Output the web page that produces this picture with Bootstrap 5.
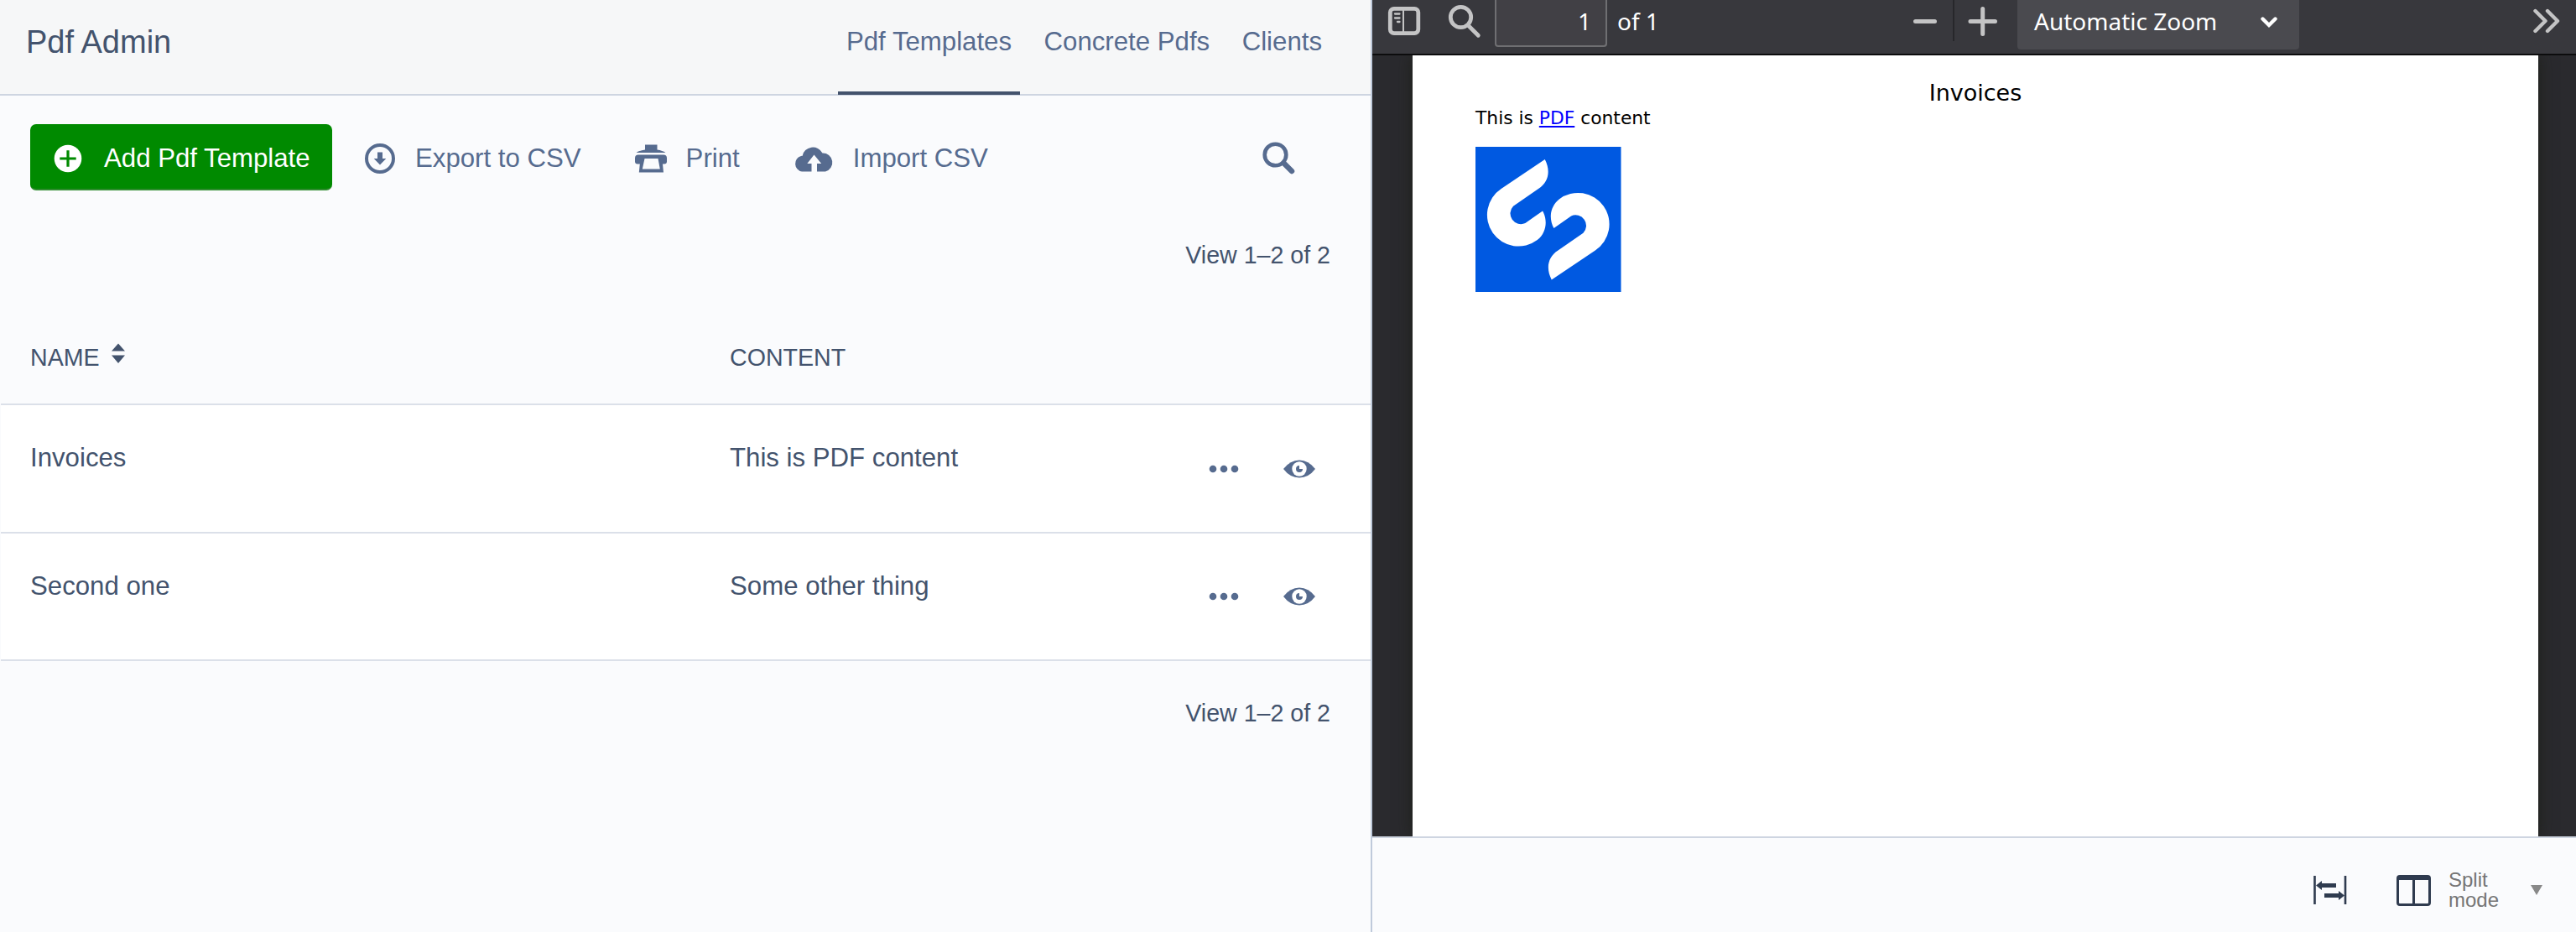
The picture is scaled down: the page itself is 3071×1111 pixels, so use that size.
<!DOCTYPE html>
<html lang="en">
<head>
<meta charset="utf-8">
<title>Pdf Admin</title>
<link href="https://cdn.jsdelivr.net/npm/bootstrap@5.3.0/dist/css/bootstrap.min.css" rel="stylesheet">
<style>
html, body { height: 100%; overflow: hidden; }
body { font-family: "Liberation Sans", Arial, sans-serif; font-size: 31.2px; line-height: 40px; color: #43536d; background: #fafbfd; }
svg { display: block; flex: none; }
.admin-pane { width: 1636px; border-right: 2px solid #bfcadb; }
.admin-head { height: 114px; background: #f6f7f8; border-bottom: 2px solid #ced5e1; padding-left: 31px; padding-right: 48px; }
.admin-title { font-size: 38px; line-height: 100px; font-weight: 400; color: #43536d; }
.admin-tabs { gap: 18.5px; height: 113px; }
.admin-tabs .nav-link { padding: 30px 10px 0; color: #566b8f; border-bottom: 4px solid transparent; white-space: nowrap; }
.admin-tabs .nav-link.active { border-bottom-color: #43536d; }
.tools { height: 113px; padding: 34px 46px 0 36px; }
.tools .btn { height: 79px; font-size: 31.2px; line-height: 40px; padding: 3px 0 0; border: 0; color: #566b8f; border-radius: 7px; white-space: nowrap; }
.tools .btn-add { width: 360px; background: #008a00; color: #fff; border-bottom: 2px solid #2f8c2f; padding: 5px 24px 0 28px; gap: 26px; }
.btn-export { margin-left: 38px; gap: 23px; }
.btn-print { margin-left: 64px; gap: 23px; }
.btn-import { margin-left: 64px; gap: 22px; }
.paging { font-size: 28.6px; padding-right: 48px; text-align: right; }
.paging-top { margin-top: 57px; }
.paging-end { margin-top: 42px; }
.grid-table { width: 1633px; margin: 0 0 0 1px; table-layout: fixed; color: #43536d; --bs-table-bg: transparent; --bs-table-color: #43536d; }
.grid-table > :not(caption) > * > * { padding: 0 0 0 35px; border-bottom: 2px solid #dbe0e9; box-shadow: none; color: #43536d; }
.grid-table thead th { height: 158px; padding-top: 82px; vertical-align: top; font-weight: 400; font-size: 28.6px; }
.grid-table tbody td { height: 153px; background: #fff; vertical-align: middle; padding-bottom: 25px; }
.grid-table tbody tr:last-child td { height: 152px; }
.grid-table tbody td.row-actions { padding: 0 66px 0 0; }
.row-icons { gap: 53px; }
.pdf-bar { height: 66px; background: #38383d; border-bottom: 2px solid #0c0c0d; color: #fff; font: 28px/50px "Noto Sans", "Open Sans", sans-serif; }
.page-box { width: 134px; height: 56px; margin-left: 16px; padding-right: 17px; border: 2px solid #6f6f72; border-top: 0; border-radius: 0 0 4px 4px; background: #414045; text-align: right; line-height: 50px; }
.pdf-rule { width: 2px; height: 49px; margin: 0 16px 0 19px; background: #27272b; }
.zoom-box { width: 336px; height: 59px; margin-left: 23px; padding: 0 26px 0 20px; background: #4a4a4f; border-radius: 0 0 4px 4px; }
.pdf-stage { height: 931px; background: #2a2a2e; padding: 0 45px 0 48px; overflow: hidden; }
.pdf-page { background: #fff; color: #000; box-shadow: 0 0 18px rgba(25,28,18,.75); font-family: "DejaVu Sans", sans-serif; padding: 29px 75px 0; }
.pdf-title { font-size: 27px; line-height: 32px; text-align: center; }
.pdf-text { font-size: 21.8px; line-height: 28px; margin-bottom: 19.5px; }
.pdf-text a { color: #00f; }
.view-bar { border-top: 2px solid #ced5e1; background: #fafbfd; padding: 14px 40px 0 0; }
.view-icon { margin-top: 30px; }
.view-split { margin: 30px 21px 0 59px; }
.mode-label { width: 98px; font-size: 24px; line-height: 24px; color: #757575; }
</style>
</head>
<body class="d-flex">
<main class="admin-pane flex-shrink-0 h-100">
  <header class="admin-head d-flex justify-content-between align-items-start">
    <h1 class="admin-title mb-0">Pdf Admin</h1>
    <nav class="nav admin-tabs flex-nowrap">
      <a class="nav-link active" href="#">Pdf Templates</a>
      <a class="nav-link" href="#">Concrete Pdfs</a>
      <a class="nav-link" href="#">Clients</a>
    </nav>
  </header>
  <div class="tools d-flex">
    <button class="btn btn-add d-flex align-items-center">
      <svg width="34" height="34" viewBox="0 0 34 34"><circle cx="17" cy="17" r="16.3" fill="#fff"/><path d="M17 7.3v19.4M7.3 17h19.4" stroke="#008a00" stroke-width="3.2"/></svg>Add Pdf Template</button>
    <button class="btn btn-export d-flex align-items-center">
      <svg width="38" height="38" viewBox="0 0 38 38"><circle cx="19" cy="19" r="16" fill="none" stroke="#566b8f" stroke-width="4"/><path d="M16 11.5h6V19h4.300L19 26.500 11.700 19H16z" fill="#566b8f"/></svg>Export to CSV</button>
    <button class="btn btn-print d-flex align-items-center">
      <svg width="38" height="34" viewBox="0 0 38 34" fill="#566b8f"><path d="M12 0.500h14.500v6Q33 7.500 36.500 10H1.500Q5 7.500 12 6.500z"/><path fill-rule="evenodd" d="M4 12.500h30q4 0 4 4v4q0 3-3 3h-2l1 10H4.800l1-10H3q-3 0-3-3v-4q0-4 4-4zm7.500 4.500L8.800 29.500h21L27.500 17z"/></svg>Print</button>
    <button class="btn btn-import d-flex align-items-center">
      <svg width="49" height="34" viewBox="0 0 49 34"><path fill="#566b8f" d="M10 32.500a9.500 9.500 0 0 1-1-18.500q1-.3 1.500 0A12.800 12.800 0 0 1 34.500 10.500 11.200 11.200 0 0 1 38 32.500H28V23h5.200L24.500 12.500 16.300 23H21.500v9.500z"/></svg>Import CSV</button>
    <button class="btn ms-auto d-flex align-items-center me-0 pe-0">
      <svg width="83" height="40" viewBox="0 0 83 40"><circle cx="15.500" cy="15.500" r="12.800" fill="none" stroke="#566b8f" stroke-width="4.600"/><path d="M25.500 25.500l9.500 9.500" stroke="#566b8f" stroke-width="6.500" stroke-linecap="round"/></svg></button>
  </div>
  <div class="paging paging-top">View 1–2 of 2</div>
  <table class="table grid-table">
    <colgroup><col style="width:834px"><col style="width:500px"><col></colgroup>
    <thead><tr>
      <th><span class="d-flex">NAME<svg style="margin-left:13px" width="18" height="40" viewBox="0 0 18 40" fill="#43536d"><path d="M9 3.500 17 12.500H1zM1 17.500h16L9 27z"/></svg></span></th>
      <th>CONTENT</th><th></th>
    </tr></thead>
    <tbody>
      <tr><td>Invoices</td><td>This is PDF content</td>
        <td class="row-actions"><div class="row-icons d-flex justify-content-end align-items-center">
          <svg width="36" height="10" viewBox="0 0 36 10" fill="#566b8f"><circle cx="5" cy="5" r="4.300"/><circle cx="18" cy="5" r="4.300"/><circle cx="31" cy="5" r="4.300"/></svg>
          <svg width="38" height="22" viewBox="0 0 38 22"><path d="M0 11Q8 .5 19 .5T38 11Q30 21.500 19 21.500T0 11z" fill="#566b8f"/><circle cx="19" cy="11" r="8.700" fill="#fff"/><path d="M19 7V11h4a4 4 0 1 1-4-4z" fill="#566b8f"/></svg>
        </div></td></tr>
      <tr><td>Second one</td><td>Some other thing</td>
        <td class="row-actions"><div class="row-icons d-flex justify-content-end align-items-center">
          <svg width="36" height="10" viewBox="0 0 36 10" fill="#566b8f"><circle cx="5" cy="5" r="4.300"/><circle cx="18" cy="5" r="4.300"/><circle cx="31" cy="5" r="4.300"/></svg>
          <svg width="38" height="22" viewBox="0 0 38 22"><path d="M0 11Q8 .5 19 .5T38 11Q30 21.500 19 21.500T0 11z" fill="#566b8f"/><circle cx="19" cy="11" r="8.700" fill="#fff"/><path d="M19 7V11h4a4 4 0 1 1-4-4z" fill="#566b8f"/></svg>
        </div></td></tr>
    </tbody>
  </table>
  <div class="paging paging-end">View 1–2 of 2</div>
</main>
<section class="flex-grow-1 h-100 d-flex flex-column">
  <div class="pdf-bar d-flex flex-shrink-0 align-items-start">
    <svg width="58" height="50" viewBox="0 0 58 50"><rect x="21.300" y="10.300" width="33.500" height="29.300" rx="4.500" fill="none" stroke="#c4c4c5" stroke-width="4.800"/><path d="M37 11v28" stroke="#c4c4c5" stroke-width="2"/><path d="M27 16.500h5.500M27 21.500h5.500M30 26h2.500" stroke="#c4c4c5" stroke-width="2.300" stroke-linecap="round"/></svg>
    <svg width="72" height="50" viewBox="0 0 72 50"><circle cx="47.500" cy="20.500" r="12.200" fill="none" stroke="#c4c4c5" stroke-width="4.800"/><path d="M56.500 30.500l11.800 11.800" stroke="#c4c4c5" stroke-width="4.800" stroke-linecap="round"/></svg>
    <div class="page-box">1</div>
    <span class="ms-2 ps-1">of 1</span>
    <svg class="ms-auto" width="28" height="50" viewBox="0 0 28 50"><path d="M2.500 25.500h23" stroke="#c4c4c5" stroke-width="5" stroke-linecap="round"/></svg>
    <div class="pdf-rule"></div>
    <svg width="36" height="50" viewBox="0 0 36 50"><path d="M3 25.500h29.500M17.700 10.500v30" stroke="#c4c4c5" stroke-width="5" stroke-linecap="round"/></svg>
    <div class="zoom-box d-flex justify-content-between"><span>Automatic Zoom</span><svg width="20" height="50" viewBox="0 0 20 50"><path d="M2.500 22.500 10 30l7.500-7.500" fill="none" stroke="#fff" stroke-width="4.400" stroke-linecap="round"/></svg></div>
    <svg width="330" height="50" viewBox="0 0 330 50"><path d="M281.500 13l12 12-12 12M296 13l12 12-12 12" fill="none" stroke="#c4c4c5" stroke-width="4.400" stroke-linecap="round" stroke-linejoin="round"/></svg>
  </div>
  <div class="pdf-stage flex-shrink-0">
    <div class="pdf-page h-100">
      <div class="pdf-title">Invoices</div>
      <p class="pdf-text">This is <a href="#">PDF</a> content</p>
      <svg width="173.500" height="173.500" viewBox="357 523 520 520"><path d="M357 523h520v520H357z" fill="#0059e1"/><g fill="#fff"><path id="hook" d="M605 568C627 610 617 650 583 672L492 735A38 38 0 0 0 535 796L597 752C615 785 612 828 578 856A112 112 0 1 1 449 673z"/><use href="#hook" transform="rotate(180 617 783)"/></g></svg>
    </div>
  </div>
  <footer class="view-bar d-flex flex-grow-1 justify-content-end align-items-start">
    <svg class="view-icon" width="40" height="36" viewBox="0 0 40 36"><path d="M1.500 1v34M38 1v34" stroke="#2f3b4f" stroke-width="2.600"/><path d="M27 10v5H10v3L3 12.500 10 7v3zM13 22h17v-3l7 5.500L30 30v-3H13z" fill="#2f3b4f"/></svg>
    <svg class="view-split" width="41" height="37" viewBox="0 0 41 37"><rect x="1.500" y="1.500" width="38" height="34" rx="2.500" fill="none" stroke="#2f3b4f" stroke-width="3"/><path d="M1.500 1.500h38V6h-38z" fill="#2f3b4f"/><path d="M20.500 5v30" stroke="#2f3b4f" stroke-width="3"/></svg>
    <div class="mode-label pt-4">Split<br>mode</div>
    <svg class="view-icon" width="14" height="36" viewBox="0 0 14 36"><path d="M0 12h14L7 24z" fill="#888"/></svg>
  </footer>
</section>
<script src="https://cdn.jsdelivr.net/npm/bootstrap@5.3.0/dist/js/bootstrap.bundle.min.js"></script>
</body>
</html>
